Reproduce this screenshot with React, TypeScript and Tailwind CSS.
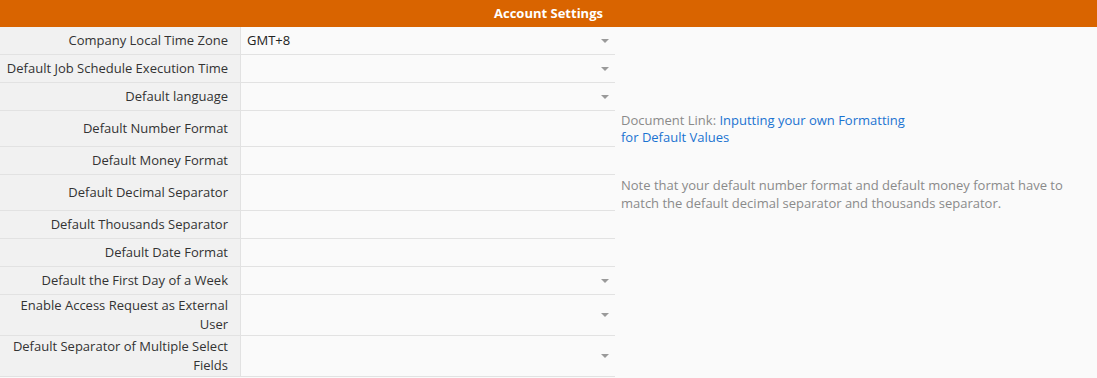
import React from 'react';

type Row = {
  label: React.ReactNode;
  value?: string;
  select?: boolean;
  h: string;
  note?: React.ReactNode;
};

const Caret = () => (
  <svg width="8" height="4" viewBox="0 0 8 4" className="shrink-0">
    <path d="M0 0h8L4 4z" fill="#9a9a9a" />
  </svg>
);

const rows: Row[] = [
  { label: 'Company Local Time Zone', value: 'GMT+8', select: true, h: 'h-[27px]' },
  { label: 'Default Job Schedule Execution Time', select: true, h: 'h-[27px]' },
  { label: 'Default language', select: true, h: 'h-[27px]' },
  {
    label: 'Default Number Format',
    h: 'h-[35px]',
    note: (
      <div className="leading-[17px]">
        <span className="text-[#8a8a8a]">Document Link: </span>
        <a className="text-[#1a73d1]">
          Inputting your own Formatting
          <br />
          for Default Values
        </a>
      </div>
    ),
  },
  { label: 'Default Money Format', h: 'h-[27px]' },
  {
    label: 'Default Decimal Separator',
    h: 'h-[35px]',
    note: (
      <div className="leading-[18px] text-[#8a8a8a] pt-[2px]">
        Note that your default number format and default money format have to match the default decimal
        separator and thousands separator.
      </div>
    ),
  },
  { label: 'Default Thousands Separator', h: 'h-[27px]' },
  { label: 'Default Date Format', h: 'h-[27px]' },
  { label: 'Default the First Day of a Week', select: true, h: 'h-[27px]' },
  {
    label: (
      <>
        Enable Access Request as External
        <br />
        User
      </>
    ),
    select: true,
    h: 'h-[40px]',
  },
  {
    label: (
      <>
        Default Separator of Multiple Select
        <br />
        Fields
      </>
    ),
    select: true,
    h: 'h-[40px]',
  },
];

export default function App() {
  return (
    <div className="min-h-[378px] bg-[#fafafa] text-[13px] text-[#333] font-['Open_Sans',sans-serif]">
      {/* 헤더 */}
      <div className="h-[27px] bg-[#d96400] flex items-center justify-center">
        <span className="text-white font-bold text-[13px]">Account Settings</span>
      </div>

      <div className="grid grid-cols-[241px_374px_1fr]">
        {rows.map((r, i) => (
          <React.Fragment key={i}>
            <div
              className={`${r.h} box-content bg-[#f1f1f1] border-r border-b border-[#e2e2e2] flex items-center justify-end text-right pr-3 leading-[19px]`}
            >
              <span>{r.label}</span>
            </div>
            <div className={`${r.h} box-content border-b border-[#e2e2e2] flex items-center pl-[6px] pr-[6px]`}>
              <span className="flex-1 text-[#222]">{r.value}</span>
              {r.select && <Caret />}
            </div>
            <div className={`${r.h} box-content flex items-center pl-[6px] pr-2 border-b border-transparent`}>
              {r.note}
            </div>
          </React.Fragment>
        ))}
      </div>
    </div>
  );
}
